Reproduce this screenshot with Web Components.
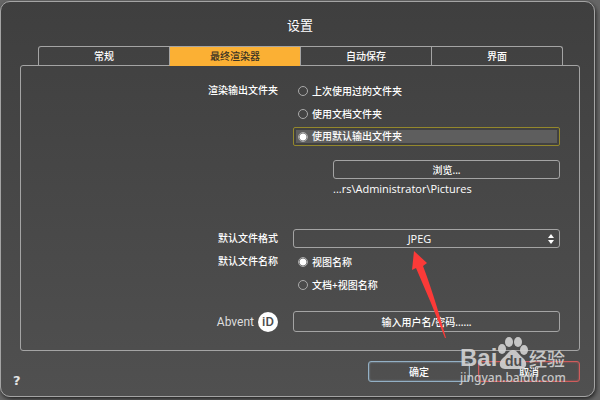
<!DOCTYPE html>
<html lang="zh-CN">
<head>
<meta charset="utf-8">
<title>设置</title>
<style>
    * { box-sizing: border-box; }

    body {
        margin: 0;
        min-height: 100vh;
        display: flex;
        padding: 1px 5px 4px 0;
        background: #666;
        color: #fff;
        font: 500 10px/14px "Noto Sans", "Noto Sans CJK SC", sans-serif;
        position: relative;
    }

    .path {
        padding: 3px 0 0 40px;
        font: 11px/14px "Open Sans", sans-serif;
    }

    .browse { margin: 14px 0 0 40px; }
</style>
</head>
<body>
<settings-dialog heading="设置">
    <tab-bar slot="tabs" tabs="常规|最终渲染器|自动保存|界面" active="1"></tab-bar>

    <form-row label="渲染输出文件夹">
        <radio-group name="folder" label="渲染输出文件夹" options="上次使用过的文件夹|使用文档文件夹|使用默认输出文件夹" checked="2" focused="2"></radio-group>
        <outline-button class="browse">浏览...</outline-button>
        <div class="path">...rs\Administrator\Pictures</div>
    </form-row>
    <form-row label="默认文件格式" style="margin-top: 33px">
        <select-field label="默认文件格式" options="JPEG|PNG|TIFF"></select-field>
    </form-row>
    <form-row label="默认文件名称" style="margin-top: 4px">
        <radio-group name="filename" label="默认文件名称" options="视图名称|文档+视图名称" checked="0"></radio-group>
    </form-row>
    <form-row style="margin-top: 17px">
        <abvent-logo slot="label"></abvent-logo>
        <outline-button size="large">输入用户名/密码......</outline-button>
    </form-row>

    <outline-button slot="actions" size="large" tone="ok">确定</outline-button>
    <outline-button slot="actions" size="large" tone="cancel">取消</outline-button>
</settings-dialog>
<pointer-arrow></pointer-arrow>
<site-watermark></site-watermark>

<script>
class SettingsDialog extends HTMLElement {
    constructor() {
        super();
        this.attachShadow({ mode: "open" });

        this.shadowRoot.innerHTML = `
            <style>
                * { box-sizing: border-box; }

                :host {
                    box-sizing: border-box;
                    flex: 1;
                    display: flex;
                    flex-direction: column;
                    padding: 0 14px 8px 12px;
                    border: 1px solid #a4a4a4;
                    border-radius: 10px;
                    background: linear-gradient(#3f3f3f, #505050);
                    box-shadow: 1px 2px 4px #222;
                }

                h1 {
                    margin: 0;
                    padding: 13px 0 11px 7px;
                    font-size: 13px;
                    line-height: 20px;
                    font-weight: 400;
                    text-align: center;
                }

                .body {
                    flex: 1;
                    display: flex;
                    flex-direction: column;
                    padding-left: 7px;
                }

                .panel {
                    flex: 1;
                    margin-top: -1px;
                    padding: 15px 19px 18px 0;
                    border: 1px solid #a4a4a4;
                    border-radius: 3px;
                }

                footer {
                    display: flex;
                    align-items: flex-start;
                    gap: 8px;
                    padding-top: 10px;
                }

                .help {
                    margin: 13px auto 0 0;
                    padding: 0;
                    border: 0;
                    background: none;
                    color: #e4e4e4;
                    font: bold 13px/14px "DejaVu Sans", sans-serif;
                }

                ::slotted(outline-button) { width: 18%; }
            </style>

            <h1></h1>
            <div class="body">
                <slot name="tabs"></slot>
                <div class="panel"><slot></slot></div>
            </div>
            <footer>
                <button class="help">?</button>
                <slot name="actions"></slot>
            </footer>
        `;
    }

    connectedCallback() {
        this.shadowRoot.querySelector("h1").textContent = this.getAttribute("heading");
    }
}

class TabBar extends HTMLElement {
    constructor() {
        super();
        this.attachShadow({ mode: "open" });

        this.shadowRoot.innerHTML = `
            <style>
                :host {
                    display: block;
                    margin: 0 17px 0 18px;
                    position: relative;
                }

                nav {
                    display: flex;
                    border: 1px solid #a4a4a4;
                    border-bottom: 0;
                    border-radius: 3px 3px 0 0;
                }

                button {
                    flex: 1;
                    height: 19px;
                    padding: 0;
                    border: 0;
                    border-bottom: 1px solid #a4a4a4;
                    background: none;
                    color: inherit;
                    font: inherit;
                }

                button + button { border-left: 1px solid #a4a4a4; }

                button.active {
                    background: #fbb034;
                    border-bottom-color: #fbb034;
                    color: #3c3425;
                }
            </style>

            <nav role="tablist"></nav>
        `;
    }

    connectedCallback() {
        const nav = this.shadowRoot.querySelector("nav");
        const active = Number(this.getAttribute("active"));

        this.getAttribute("tabs").split("|").forEach((text, i) => {
            const button = document.createElement("button");
            button.setAttribute("role", "tab");
            button.textContent = text;
            button.classList.toggle("active", i === active);
            nav.append(button);
        });
    }
}

class FormRow extends HTMLElement {
    constructor() {
        super();
        this.attachShadow({ mode: "open" });

        this.shadowRoot.innerHTML = `
            <style>
                :host {
                    display: grid;
                    grid-template-columns: 257fr 267fr;
                    column-gap: 15px;
                }

                .label {
                    display: flex;
                    justify-content: flex-end;
                    line-height: 18px;
                }
            </style>

            <div class="label"><slot name="label"></slot></div>
            <div><slot></slot></div>
        `;
    }

    connectedCallback() {
        if (this.hasAttribute("label")) {
            this.shadowRoot.querySelector("slot").textContent = this.getAttribute("label");
        }
    }
}

class RadioGroup extends HTMLElement {
    constructor() {
        super();
        this.attachShadow({ mode: "open" });

        this.shadowRoot.innerHTML = `
            <style>
                :host {
                    display: flex;
                    flex-direction: column;
                    gap: 4px;
                }

                label {
                    display: flex;
                    align-items: center;
                    box-sizing: border-box;
                    height: 19px;
                    padding: 0 4px;
                    gap: 4px;
                    border: 1px solid transparent;
                    border-radius: 2px;
                }

                label.focused {
                    border-color: #94882c;
                    padding: 0 2px;
                    background: #414141;
                }

                label.focused span {
                    flex: 1;
                    margin-left: -16px;
                    padding-left: 16px;
                    line-height: 13px;
                    background: #5e5e5e;
                }

                label.focused input { z-index: 1; margin-left: 2px; }

                input {
                    appearance: none;
                    box-sizing: border-box;
                    width: 10px;
                    height: 10px;
                    margin: 0;
                    border: 1px solid #aaa;
                    border-radius: 50%;
                }

                input:checked {
                    background: radial-gradient(circle, #fff 3px, transparent 4px);
                }
            </style>
        `;
    }

    connectedCallback() {
        this.setAttribute("role", "radiogroup");
        this.setAttribute("aria-label", this.getAttribute("label"));

        this.getAttribute("options").split("|").forEach((text, i) => {
            const label = document.createElement("label");
            label.innerHTML = `<input type="radio"><span></span>`;
            const input = label.querySelector("input");
            input.name = this.getAttribute("name");
            input.checked = String(i) === this.getAttribute("checked");
            label.querySelector("span").textContent = text;
            label.classList.toggle("focused", String(i) === this.getAttribute("focused"));
            this.shadowRoot.append(label);
        });
    }
}

class OutlineButton extends HTMLElement {
    constructor() {
        super();
        this.attachShadow({ mode: "open" });

        this.shadowRoot.innerHTML = `
            <style>
                :host { display: block; --line: #a4a4a4; }
                :host([tone="ok"]) { --line: #93b0c5; }
                :host([tone="cancel"]) { --line: #d05c5c; }

                button {
                    display: block;
                    width: 100%;
                    height: 19px;
                    padding: 0;
                    border: 1px solid var(--line);
                    border-radius: 3px;
                    background: none;
                    color: inherit;
                    font: inherit;
                }

                :host([size="large"]) button { height: 21px; }
                :host([tone]) button { box-shadow: inset 0 0 2px var(--line); }
            </style>

            <button><slot></slot></button>
        `;
    }
}

class SelectField extends HTMLElement {
    constructor() {
        super();
        this.attachShadow({ mode: "open" });

        this.shadowRoot.innerHTML = `
            <style>
                :host { display: grid; align-items: center; }

                select {
                    grid-area: 1 / 1;
                    appearance: none;
                    width: 100%;
                    height: 19px;
                    padding: 0 14px 0 0;
                    border: 1px solid #a4a4a4;
                    border-radius: 3px;
                    background: none;
                    color: inherit;
                    font: 11px/14px "Open Sans", sans-serif;
                    text-align: center;
                    text-align-last: center;
                }

                svg {
                    grid-area: 1 / 1;
                    justify-self: end;
                    margin-right: 6px;
                    pointer-events: none;
                }
            </style>

            <select></select>
            <svg width="6" height="10" viewBox="0 0 6 10" fill="#fff"><path d="M3 0 6 4H0zM0 6h6L3 10z"/></svg>
        `;
    }

    connectedCallback() {
        const select = this.shadowRoot.querySelector("select");
        select.setAttribute("aria-label", this.getAttribute("label"));
        this.getAttribute("options").split("|").forEach((text) => select.add(new Option(text)));
    }
}

class AbventLogo extends HTMLElement {
    constructor() {
        super();
        this.attachShadow({ mode: "open" });

        this.shadowRoot.innerHTML = `
            <style>
                :host {
                    display: flex;
                    align-items: center;
                    gap: 4px;
                    color: #dedede;
                    font: 12px/20px Roboto, sans-serif;
                }

                .id {
                    width: 20px;
                    height: 20px;
                    border-radius: 50%;
                    background: #fff;
                    color: #4b4b4b;
                    font-size: 13px;
                    font-weight: 500;
                    text-align: center;
                }
            </style>

            <span>Abvent</span>
            <span class="id">iD</span>
        `;
    }
}

class PointerArrow extends HTMLElement {
    constructor() {
        super();
        this.attachShadow({ mode: "open" });

        this.shadowRoot.innerHTML = `
            <style>
                :host {
                    position: absolute;
                    left: 411px;
                    top: 250px;
                    pointer-events: none;
                }

                svg { display: block; }
            </style>

            <svg width="36" height="90" viewBox="0 0 36 90" fill="#fb3a38">
                <path d="M3 1 16 13 12 16 Q22 42 35 88L34 88Q20 52 5 18L1 20z"/>
            </svg>
        `;
    }
}

class SiteWatermark extends HTMLElement {
    constructor() {
        super();
        this.attachShadow({ mode: "open" });

        this.shadowRoot.innerHTML = `
            <style>
                :host {
                    position: absolute;
                    right: 35px;
                    bottom: 15px;
                    width: 105px;
                    color: #d4d4d4;
                    opacity: .9;
                    pointer-events: none;
                }

                .brand {
                    display: flex;
                    align-items: flex-end;
                    justify-content: space-between;
                    font: bold 24px/24px "Liberation Sans", sans-serif;
                }

                .cn { font: 500 18px/24px "Noto Sans CJK SC", sans-serif; }
                .site { font: 500 12px/16px "Noto Sans", sans-serif; }
                svg { display: block; flex: none; }
                text { font: bold 14px "Liberation Sans", sans-serif; fill: #4e4e4e; }
            </style>

            <div class="brand">
                <span>Bai</span>
                <svg width="30" height="34" viewBox="0 0 30 34" fill="currentColor">
                    <ellipse cx="4" cy="13" rx="4" ry="5"/>
                    <ellipse cx="11" cy="6" rx="4" ry="5"/>
                    <ellipse cx="20" cy="6" rx="4" ry="5"/>
                    <ellipse cx="26" cy="14" rx="4" ry="5"/>
                    <path d="M15 14C11 14 9 19 5 22C0 26 1 33 7 33H23C29 33 30 26 25 22C21 19 19 14 15 14z"/>
                    <text x="7" y="30">du</text>
                </svg>
                <span class="cn">经验</span>
            </div>
            <div class="site">jingyan.baidu.com</div>
        `;
    }
}

customElements.define("settings-dialog", SettingsDialog);
customElements.define("tab-bar", TabBar);
customElements.define("form-row", FormRow);
customElements.define("radio-group", RadioGroup);
customElements.define("outline-button", OutlineButton);
customElements.define("select-field", SelectField);
customElements.define("abvent-logo", AbventLogo);
customElements.define("pointer-arrow", PointerArrow);
customElements.define("site-watermark", SiteWatermark);
</script>
</body>
</html>
